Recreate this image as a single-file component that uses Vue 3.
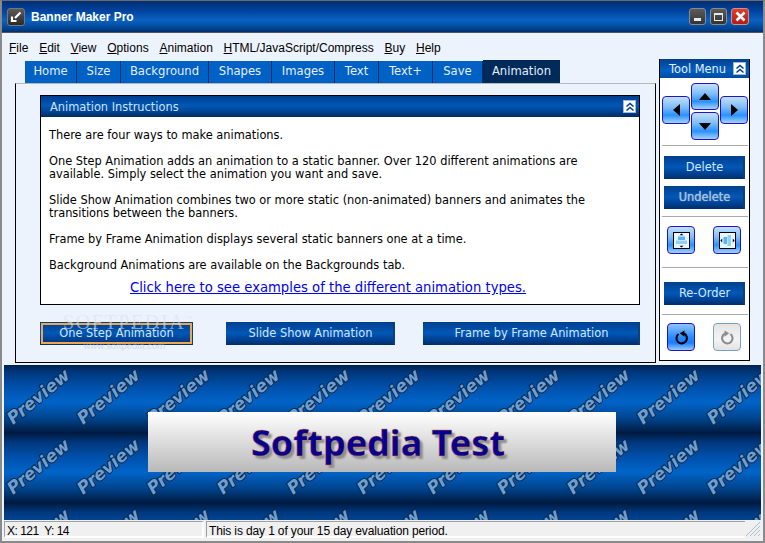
<script setup>
const menus = [
  ['F', 'ile'], ['E', 'dit'], ['V', 'iew'], ['O', 'ptions'], ['A', 'nimation'],
  ['H', 'TML/JavaScript/Compress'], ['B', 'uy'], ['H', 'elp']
]
const tabs = [
  ['Home', 52], ['Size', 44], ['Background', 88], ['Shapes', 63], ['Images', 63],
  ['Text', 44], ['Text+', 54], ['Save', 50]
]
const previews = []
for (let r = 0; r < 3; r++) {
  for (let c = 0; c < 11; c++) {
    previews.push({ id: r + '-' + c, x: 9 + c * 70, y: 60 + r * 70 })
  }
}
</script>

<template>
  <div class="window">
    <header class="titlebar">
      <span class="app-icon">
        <svg width="12" height="12" viewBox="0 0 12 12"><path d="M10.5 1.5 5 7M2 5.5v4.5H6.5" fill="none" stroke="#fff" stroke-width="2.2"/></svg>
      </span>
      <span class="title">Banner Maker Pro</span>
      <span class="controls">
        <span class="ctl"><i class="min"></i></span>
        <span class="ctl"><i class="max"></i></span>
        <span class="ctl close">
          <svg width="11" height="11" viewBox="0 0 11 11"><path d="M1.5 1.5 9.5 9.5M9.5 1.5 1.5 9.5" stroke="#fff" stroke-width="2.6"/></svg>
        </span>
      </span>
    </header>

    <div class="client">
      <div class="top">
        <div class="left">
          <nav class="menu">
            <span v-for="(m, i) in menus" :key="i"><u>{{ m[0] }}</u>{{ m[1] }}</span>
          </nav>
          <div class="tabs">
            <span v-for="t in tabs" :key="t[0]" class="tab" :style="{ width: t[1] + 'px' }">{{ t[0] }}</span>
            <span class="tab active">Animation</span>
          </div>
          <section class="panel">
            <div class="card">
              <div class="card-head">
                <span>Animation Instructions</span>
                <span class="collapse">
                  <svg width="10" height="10" viewBox="0 0 10 10"><path d="M1.5 4.5 5 1.5 8.5 4.5M1.5 8.5 5 5.5 8.5 8.5" fill="none" stroke="#003a8c" stroke-width="1.5"/></svg>
                </span>
              </div>
              <div class="card-body">
                <p>There are four ways to make animations.</p>
                <p>One Step Animation adds an animation to a static banner. Over 120 different animations are<br>available. Simply select the animation you want and save.</p>
                <p>Slide Show Animation combines two or more static (non-animated) banners and animates the<br>transitions between the banners.</p>
                <p>Frame by Frame Animation displays several static banners one at a time.</p>
                <p>Background Animations are available on the Backgrounds tab.</p>
                <a class="link">Click here to see examples of the different animation types.</a>
              </div>
            </div>
            <div class="actions">
              <button class="btn focus one">One Step Animation</button>
              <button class="btn two">Slide Show Animation</button>
              <button class="btn three">Frame by Frame Animation</button>
            </div>
            <div class="watermark">
              <span class="wm-big">SOFTPEDIA<sup>™</sup></span>
              <span class="wm-small">www.softpedia.com</span>
            </div>
          </section>
        </div>

        <aside class="tools">
          <div class="tools-head">
            <span>Tool Menu</span>
            <span class="collapse">
              <svg width="10" height="10" viewBox="0 0 10 10"><path d="M1.5 4.5 5 1.5 8.5 4.5M1.5 8.5 5 5.5 8.5 8.5" fill="none" stroke="#003a8c" stroke-width="1.5"/></svg>
            </span>
          </div>
          <div class="arrows">
            <span class="key up"><svg width="12" height="7" viewBox="0 0 12 7"><path d="M6 0 12 7H0Z"/></svg></span>
            <span class="key lf"><svg width="7" height="12" viewBox="0 0 7 12"><path d="M0 6 7 0V12Z"/></svg></span>
            <span class="key rt"><svg width="7" height="12" viewBox="0 0 7 12"><path d="M7 6 0 0V12Z"/></svg></span>
            <span class="key dn"><svg width="12" height="7" viewBox="0 0 12 7"><path d="M6 7 12 0H0Z"/></svg></span>
          </div>
          <hr class="rule r1">
          <button class="btn tool-btn b1">Delete</button>
          <button class="btn tool-btn b2 dim">Undelete</button>
          <hr class="rule r2">
          <div class="pair p1">
            <span class="key sq">
              <svg width="17" height="17" viewBox="0 0 17 17">
                <rect x=".5" y=".5" width="16" height="16" fill="#eaf6ff" stroke="#000"/>
                <path d="M6.5 3.2h4L8.5 1.4ZM6.5 13.8h4l-2 1.8Z" fill="#000"/>
                <rect x="5" y="4.5" width="7" height="3.5" fill="#58b4f6"/>
                <rect x="3" y="8.5" width="11" height="3.5" fill="#8fd0fb"/>
              </svg>
            </span>
            <span class="key sq">
              <svg width="17" height="17" viewBox="0 0 17 17">
                <rect x=".5" y=".5" width="16" height="16" fill="#eaf6ff" stroke="#000"/>
                <path d="M3.2 6.5v4L1.4 8.5ZM13.8 6.5v4l1.8-2Z" fill="#000"/>
                <rect x="4.5" y="5" width="3.5" height="7" fill="#58b4f6"/>
                <rect x="8.5" y="3" width="3.5" height="11" fill="#8fd0fb"/>
              </svg>
            </span>
          </div>
          <hr class="rule r3">
          <button class="btn tool-btn b3">Re-Order</button>
          <hr class="rule r4">
          <div class="pair p2">
            <span class="key sq undo">
              <svg width="15" height="15" viewBox="0 0 18 18"><path d="M5.5 4.8A6.3 6.3 0 1 0 12 4.2" fill="none" stroke="#000" stroke-width="2.6"/><path d="M12.5 .5V8L7 4Z" fill="#000"/></svg>
            </span>
            <span class="key sq off">
              <svg width="15" height="15" viewBox="0 0 18 18"><path d="M12.5 4.8A6.3 6.3 0 1 1 6 4.2" fill="none" stroke="#8d8d8d" stroke-width="2.6"/><path d="M5.5 .5V8L11 4Z" fill="#8d8d8d"/></svg>
            </span>
          </div>
        </aside>
      </div>

      <section class="banner">
        <svg class="preview-layer" width="757" height="155" viewBox="0 0 757 155">
          <text
            v-for="p in previews"
            :key="p.id"
            class="pv"
            :transform="'translate(' + p.x + ' ' + p.y + ') rotate(-39.5)'"
          >Preview</text>
        </svg>
        <div class="plate"><span class="plate-text">Softpedia Test</span></div>
      </section>

      <footer class="status">
        <span class="cell xy">X: 121&nbsp; Y: 14</span>
        <span class="cell msg">This is day 1 of your 15 day evaluation period.</span>
        <span class="grip">
          <svg width="16" height="16" viewBox="0 0 16 16"><path d="M1 15 15 1M5 15 15 5M9 15 15 9M13 15l2-2" stroke="#a9bdd0" fill="none"/></svg>
        </span>
      </footer>
    </div>
  </div>
</template>

<style scoped>
.window {
  width: 765px;
  height: 543px;
  box-sizing: border-box;
  border: 2px solid #8a8a8a;
  border-top: 1px solid #6b6b6b;
  display: flex;
  flex-direction: column;
  background: #ecf3fd;
  font-family: "DejaVu Sans", sans-serif;
  overflow: hidden;
}
.titlebar {
  height: 32px;
  flex: none;
  display: flex;
  align-items: center;
  padding: 0 14px 0 5px;
  background: linear-gradient(#002f74 0, #00419b 30%, #0a62c4 62%, #00428f 90%, #002f6c 100%);
  border-bottom: 1px solid #555;
  box-sizing: border-box;
  color: #fff;
}
.app-icon {
  width: 18px;
  height: 18px;
  border: 1px solid #777;
  border-radius: 3px;
  background: linear-gradient(#5a5a5a, #2a2a2a);
  display: flex;
  align-items: center;
  justify-content: center;
  box-sizing: border-box;
}
.title {
  margin-left: 6px;
  font: bold 12px "Liberation Sans", sans-serif;
}
.controls {
  margin-left: auto;
  display: flex;
  gap: 4px;
}
.ctl {
  width: 17px;
  height: 17px;
  box-sizing: border-box;
  border: 1px solid #8a8a8a;
  border-radius: 3px;
  background: linear-gradient(#5b5b5b, #333);
  display: flex;
  align-items: center;
  justify-content: center;
}
.ctl.close {
  width: 18px;
  background: linear-gradient(#e23c30, #b31c12);
  border-color: #c9938f;
}
.min {
  display: block;
  width: 7px;
  height: 3px;
  margin-top: 5px;
  background: #e8e8e8;
}
.max {
  display: block;
  width: 9px;
  height: 8px;
  box-sizing: border-box;
  border: 1px solid #e8e8e8;
  border-top-width: 2px;
}
.client {
  flex: 1;
  min-height: 0;
  padding: 0 2px;
  display: flex;
  flex-direction: column;
}
.top {
  height: 332px;
  flex: none;
  display: flex;
}
.left {
  width: 652px;
  flex: none;
  display: flex;
  flex-direction: column;
}
.menu {
  height: 28px;
  flex: none;
  box-sizing: border-box;
  padding: 7px 0 0 5px;
  display: flex;
  gap: 10.8px;
  font: 12px/16px "Liberation Sans", sans-serif;
  color: #000;
}
.tabs {
  margin-left: 21px;
  height: 22px;
  flex: none;
  display: flex;
  align-items: flex-end;
  font-size: 11.6px;
  color: #e4eefb;
}
.tab {
  height: 22px;
  line-height: 21px;
  text-align: center;
  background: #0061c4;
  border-right: 1px solid #002f6c;
  box-sizing: border-box;
  flex: none;
}
.tab.active {
  width: 77px;
  height: 23px;
  line-height: 23px;
  background: #002a5a;
  border-right: 0;
}
.panel {
  position: relative;
  margin-left: 11px;
  width: 641px;
  height: 280px;
  box-sizing: border-box;
  border: 1px solid #000;
  border-top: 1px solid #b4b8bd;
  padding: 11px 15px 0 24px;
}
.card {
  height: 210px;
  box-sizing: border-box;
  border: 1px solid #000;
  background: #fff;
}
.card-head {
  height: 21px;
  display: flex;
  align-items: center;
  justify-content: space-between;
  padding: 0 3px 0 9px;
  font-size: 11.4px;
  color: #cfe0f6;
  background: linear-gradient(#003d8f 0, #0058b4 45%, #00479a 70%, #002a5e 100%);
}
.collapse {
  width: 13px;
  height: 13px;
  box-sizing: border-box;
  background: #fff;
  border: 1px solid #9fb8d8;
  display: flex;
  align-items: center;
  justify-content: center;
}
.card-body {
  padding: 12px 8px 0;
  font-size: 11.4px;
  line-height: 13px;
  color: #000;
}
.card-body p {
  margin: 0 0 13px;
}
.link {
  display: block;
  margin-top: -5px;
  padding-left: 81px;
  font-size: 13.2px;
  line-height: 16px;
  color: #0000ee;
  text-decoration: underline;
  white-space: nowrap;
}
.actions {
  margin-top: 17px;
  display: flex;
}
.btn {
  display: block;
  height: 23px;
  padding: 0 0 0 2px;
  border: 0;
  border-right: 2px solid #0a3f80;
  border-bottom: 1px solid #003070;
  box-sizing: border-box;
  background: linear-gradient(#003f8e 0, #0058b6 50%, #00449a 75%, #00316f 100%);
  color: #d3e5fb;
  font: 11.4px "DejaVu Sans", sans-serif;
  text-align: center;
}
.one { width: 153px; }
.two { width: 169px; margin-left: 33px; }
.three { width: 217px; margin-left: 28px; }
.focus {
  outline: 2px solid #f0a64a;
  outline-offset: -3px;
}
.watermark {
  position: absolute;
  left: 47px;
  top: 228px;
  display: flex;
  flex-direction: column;
  align-items: center;
  pointer-events: none;
}
.wm-big {
  font: 20px/20px "Liberation Serif", serif;
  letter-spacing: 1.6px;
  color: rgba(222, 226, 232, .6);
}
.wm-big sup {
  font-size: 7px;
  line-height: 0;
}
.wm-small {
  margin-top: 8px;
  margin-right: 8px;
  font: 9.5px/12px "Liberation Sans", sans-serif;
  color: rgba(185, 195, 210, .55);
}
.tools {
  margin: 26px 0 0 3px;
  width: 91px;
  height: 302px;
  box-sizing: border-box;
  background: #fff;
  border: 1px solid #000;
  border-top: 0;
  display: flex;
  flex-direction: column;
  position: relative;
}
.tools-head {
  height: 19px;
  flex: none;
  display: flex;
  align-items: center;
  justify-content: space-between;
  padding: 0 3px 0 9px;
  color: #e4eefb;
  font-size: 11.4px;
  background: linear-gradient(#00408f, #0060c2 60%, #004a9e);
}
.arrows {
  margin: 5px 0 0 2px;
  display: grid;
  grid-template-columns: 28px 28px 28px;
  column-gap: 1px;
  grid-template-rows: 13px 14px 2px 12px 16px;
}
.key {
  box-sizing: border-box;
  border: 1px solid #1c14c8;
  border-radius: 4px;
  background: linear-gradient(#c4e0fc 0, #7dbcf8 40%, #2a92ff 70%, #a7d2fb 100%);
  display: flex;
  align-items: center;
  justify-content: center;
}
.up { grid-column: 2; grid-row: 1 / 3; }
.lf { grid-column: 1; grid-row: 2 / 5; }
.rt { grid-column: 3; grid-row: 2 / 5; }
.dn { grid-column: 2; grid-row: 4 / 6; }
.rule {
  flex: none;
  height: 1px;
  margin: 0 1px 0 2px;
  border: 0;
  background: #a9a9a9;
}
.r1 { margin-top: 5px; }
.r2 { margin-top: 7px; }
.r3 { margin-top: 13px; }
.r4 { margin-top: 9px; }
.tool-btn {
  flex: none;
  width: 81px;
  margin-left: 4px;
}
.b1 { margin-top: 10px; }
.b2 { margin-top: 7px; }
.b3 { margin-top: 14px; }
.dim {
  color: #a7c0d8;
  text-shadow: 0 0 1px #b9cfe3;
}
.pair {
  display: flex;
  gap: 18px;
  padding-left: 7px;
}
.p1 { margin-top: 9px; }
.p2 { margin-top: 8px; }
.sq {
  width: 28px;
  height: 28px;
}
.sq.undo {
  background: linear-gradient(#8fc4fb 0, #2a8cff 50%, #1a7cff 72%, #9ccafb 100%);
}
.sq.off {
  border-color: #7f9fbe;
  background: linear-gradient(#e4e4e4, #f4f4f4 60%, #e2e2e2);
}
.banner {
  position: relative;
  height: 155px;
  flex: none;
  overflow: hidden;
  background: linear-gradient(#001a40 0, #00377c 9px, #0052ad 25px, #0064c8 39px, #00458f 55px, #001a40 70px) 0 -2px / 100% 70px repeat-y;
}
.preview-layer {
  position: absolute;
  left: 0;
  top: 0;
}
.pv {
  font: italic bold 17px "DejaVu Sans", sans-serif;
  fill: #6f9fd0;
  stroke: #0a2a50;
  stroke-width: 2px;
  paint-order: stroke;
  letter-spacing: -.1px;
}
.plate {
  position: relative;
  margin: 47px 0 0 144px;
  width: 468px;
  height: 60px;
  box-sizing: border-box;
  padding-right: 8px;
  display: flex;
  align-items: center;
  justify-content: center;
  background: linear-gradient(#fff, #b9b9b9);
}
.plate-text {
  font: bold 36px "Noto Sans", sans-serif;
  color: #0a0090;
  -webkit-text-stroke: .3px #d8772a;
  text-shadow: 3px 3px 2px #8d8d8d;
}
.status {
  flex: 1;
  min-height: 0;
  display: flex;
  align-items: flex-start;
  background: #f0f0f0;
  font: 12px/14px "Liberation Sans", sans-serif;
  color: #000;
  position: relative;
}
.cell {
  box-sizing: border-box;
  height: 17px;
  margin-top: 1px;
  padding: 2px 0 0 2px;
  border-top: 1px solid #a0a0a0;
  border-bottom: 2px solid #fff;
  letter-spacing: -.13px;
}
.xy {
  width: 200px;
  border-right: 2px solid #fff;
  border-left: 1px solid #a0a0a0;
  letter-spacing: -.5px;
}
.msg {
  margin-left: 2px;
  width: 539px;
  border-left: 1px solid #a0a0a0;
}
.grip {
  margin-left: auto;
  margin-top: 1px;
  display: block;
  height: 16px;
}
</style>
